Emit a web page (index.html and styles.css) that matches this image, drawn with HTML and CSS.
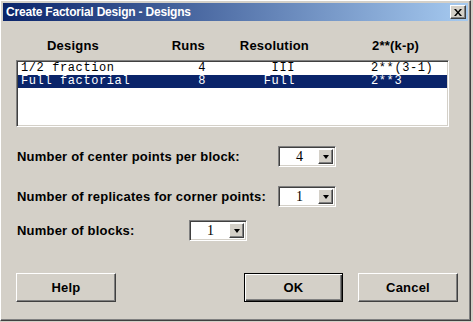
FILE: index.html
```html
<!DOCTYPE html>
<html lang="en">

<head>
    <meta charset="UTF-8">
    <title>Create Factorial Design - Designs</title>
    <link rel="stylesheet" href="styles.css">
</head>

<body>

    <div class="window">
        <div class="titlebar">
            <span class="title">Create Factorial Design - Designs</span>
            <button class="close">
                <svg width="8" height="7" viewBox="0 0 8 7">
                    <path d="M0 0h2l2 2.5 2-2.5h2l-3 3.5 3 3.5h-2l-2-2.5-2 2.5h-2l3-3.5z" fill="#000" />
                </svg>
            </button>
        </div>

        <div class="content">
            <!-- cabecalho da lista -->
            <div class="list-head">
                <span class="h-design">Designs</span>
                <span class="h-runs">Runs</span>
                <span class="h-res">Resolution</span>
                <span class="h-frac">2**(k-p)</span>
            </div>

            <div class="list">
                <div class="row">
                    <span class="c-design">1/2 fraction</span>
                    <span class="c-runs">4</span>
                    <span class="c-res">III</span>
                    <span class="c-frac">2**(3-1)</span>
                </div>
                <div class="row selected">
                    <span class="c-design">Full factorial</span>
                    <span class="c-runs">8</span>
                    <span class="c-res">Full</span>
                    <span class="c-frac">2**3</span>
                </div>
            </div>

            <div class="field first">
                <label class="label wide">Number of center points per block:</label>
                <div class="combo"><span class="value">4</span><span class="drop"><i class="arrow"></i></span></div>
            </div>

            <div class="field second">
                <label class="label wide">Number of replicates for corner points:</label>
                <div class="combo"><span class="value">1</span><span class="drop"><i class="arrow"></i></span></div>
            </div>

            <div class="field third">
                <label class="label narrow">Number of blocks:</label>
                <div class="combo"><span class="value">1</span><span class="drop"><i class="arrow"></i></span></div>
            </div>

            <div class="buttons">
                <button class="btn help">Help</button>
                <button class="btn ok">OK</button>
                <button class="btn cancel">Cancel</button>
            </div>
        </div>
    </div>

</body>

</html>
```

FILE: styles.css
```css
body {
    margin: 0;
    background: #d4d0c8;
    font-family: "Liberation Sans", Arial, sans-serif;
}

.window {
    box-sizing: border-box;
    width: 471px;
    height: 321px;
    padding: 2px;
    background: #d4d0c8;
    border-top: 1px solid #ffffff;
    border-left: 1px solid #ffffff;
    border-right: 1px solid #404040;
    border-bottom: 1px solid #404040;
    box-shadow: inset -1px -1px #808080;
}

.titlebar {
    height: 18px;
    display: flex;
    align-items: center;
    justify-content: space-between;
    padding: 0 2px 0 3px;
    background: linear-gradient(to right, #0a246a, #a6caf0);
}

.title {
    color: #ffffff;
    font-weight: bold;
    font-size: 12px;
    letter-spacing: -0.2px;
}

.close {
    box-sizing: border-box;
    width: 16px;
    height: 14px;
    padding: 0;
    display: flex;
    align-items: center;
    justify-content: center;
    background: #d4d0c8;
    border-top: 1px solid #ffffff;
    border-left: 1px solid #ffffff;
    border-right: 1px solid #404040;
    border-bottom: 1px solid #404040;
    box-shadow: inset -1px -1px #808080;
}

.content {
    padding-left: 13px;
    font-size: 13px;
    font-weight: bold;
    letter-spacing: 0.2px;
    color: #000000;
}

.list-head {
    display: flex;
    margin-top: 17px;
    height: 15px;
    line-height: 15px;
}

.h-design {
    width: 114px;
    text-align: center;
}

.h-runs {
    width: 75px;
    text-align: right;
}

.h-res {
    width: 104px;
    text-align: right;
}

.h-frac {
    padding-left: 63px;
}

.list {
    box-sizing: border-box;
    width: 433px;
    height: 67px;
    margin-top: 7px;
    background: #ffffff;
    border-top: 1px solid #808080;
    border-left: 1px solid #808080;
    border-right: 1px solid #ffffff;
    border-bottom: 1px solid #ffffff;
    box-shadow: inset 1px 1px #404040, inset -1px -1px #d4d0c8;
    padding: 1px;
    font-family: "Liberation Mono", "Courier New", monospace;
    font-weight: normal;
    font-size: 12px;
    letter-spacing: 0.6px;
}

.row {
    display: flex;
    height: 13px;
    line-height: 13px;
    white-space: pre;
}

.row.selected {
    background: #0a246a;
    color: #ffffff;
}

.c-design {
    width: 127px;
    padding-left: 3px;
}

.c-runs {
    width: 58px;
    text-align: right;
}

.c-res {
    width: 89px;
    text-align: right;
}

.c-frac {
    padding-left: 76px;
}

.field {
    display: flex;
    align-items: center;
    height: 21px;
}

.field.first {
    margin-top: 19px;
}

.field.second {
    margin-top: 19px;
}

.field.third {
    margin-top: 13px;
}

.label {
    padding-left: 1px;
}

.label.wide {
    width: 261px;
}

.label.narrow {
    width: 172px;
}

.combo {
    box-sizing: border-box;
    width: 58px;
    height: 21px;
    display: flex;
    padding: 2px;
    background: #ffffff;
    border-top: 1px solid #808080;
    border-left: 1px solid #808080;
    border-right: 1px solid #ffffff;
    border-bottom: 1px solid #ffffff;
    box-shadow: inset 1px 1px #404040, inset -1px -1px #d4d0c8;
}

.value {
    flex: 1;
    text-align: center;
    font-family: "Liberation Serif", "Times New Roman", serif;
    font-weight: normal;
    font-size: 14px;
    line-height: 16px;
}

.drop {
    box-sizing: border-box;
    width: 15px;
    height: 15px;
    display: flex;
    align-items: center;
    justify-content: center;
    background: #d4d0c8;
    border-top: 1px solid #ffffff;
    border-left: 1px solid #ffffff;
    border-right: 1px solid #404040;
    border-bottom: 1px solid #404040;
    box-shadow: inset -1px -1px #808080;
}

.arrow {
    width: 0;
    height: 0;
    border-left: 3.5px solid transparent;
    border-right: 3.5px solid transparent;
    border-top: 4px solid #000000;
}

.buttons {
    display: flex;
    margin-top: 32px;
}

.btn {
    box-sizing: border-box;
    height: 29px;
    padding: 0;
    background: #d4d0c8;
    font-family: "Liberation Sans", Arial, sans-serif;
    font-weight: bold;
    font-size: 13px;
    letter-spacing: 0.2px;
    color: #000000;
    border-top: 1px solid #ffffff;
    border-left: 1px solid #ffffff;
    border-right: 1px solid #404040;
    border-bottom: 1px solid #404040;
    box-shadow: inset -1px -1px #808080;
}

.help {
    width: 100px;
}

.ok {
    width: 99px;
    margin-left: 128px;
    border: 1px solid #000000;
    box-shadow: inset 1px 1px #ffffff, inset -1px -1px #404040, inset -2px -2px #808080;
}

.cancel {
    width: 100px;
    margin-left: 15px;
}
```
